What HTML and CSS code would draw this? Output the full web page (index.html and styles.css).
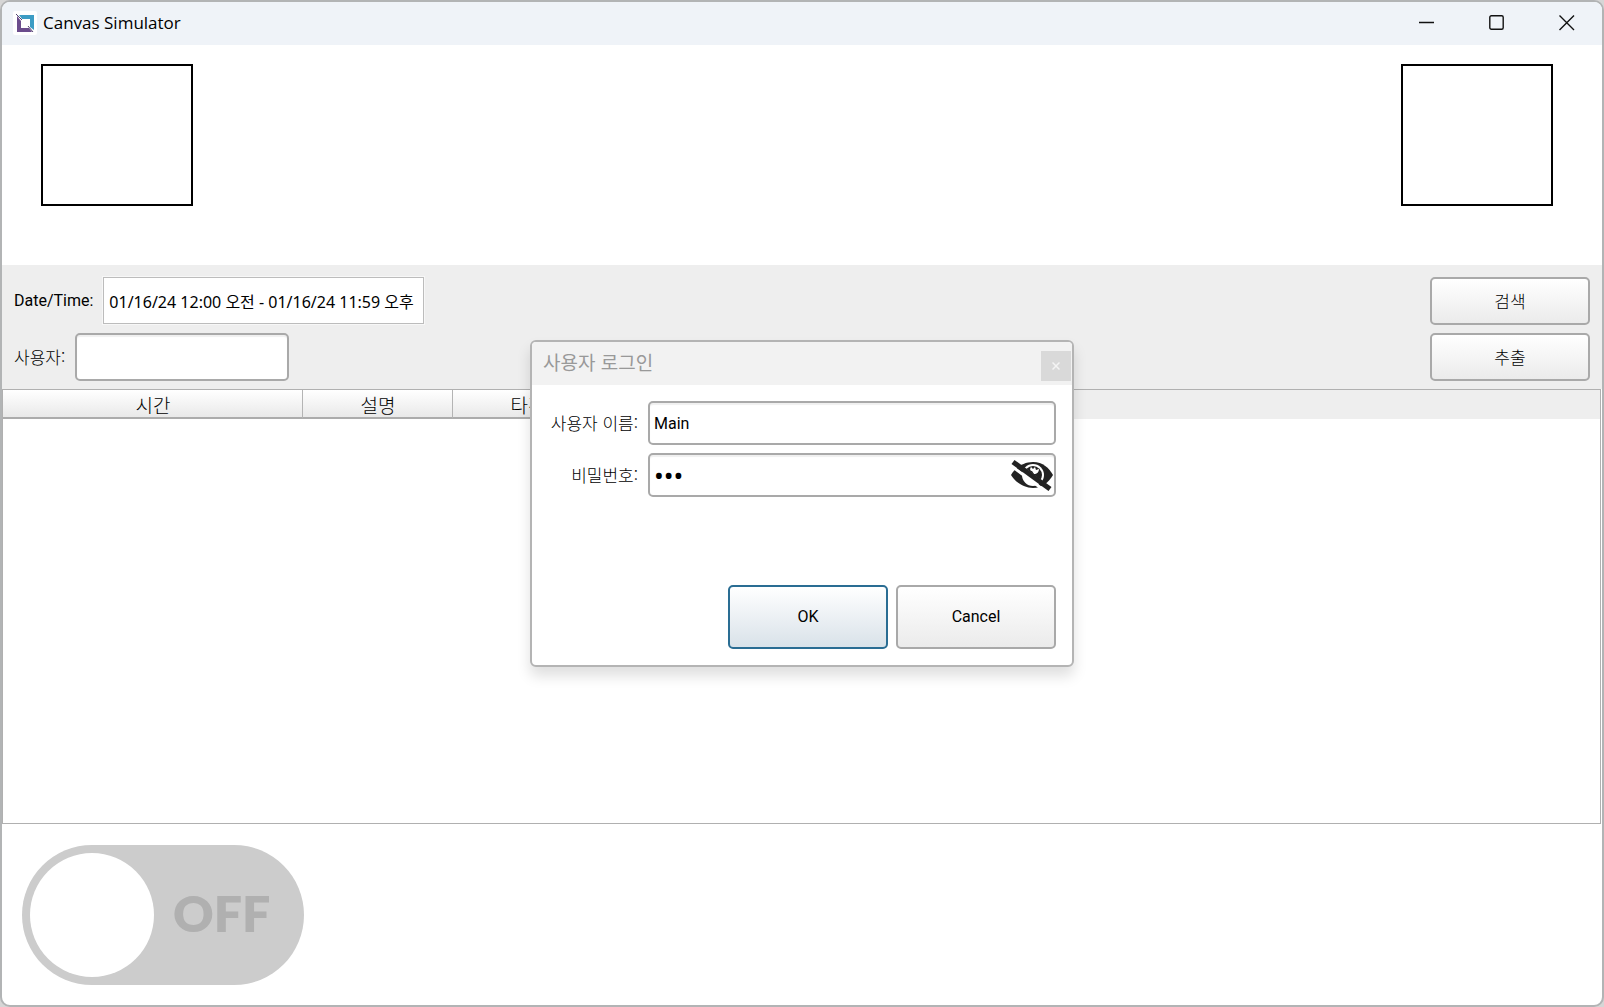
FILE: index.html
```html
<!DOCTYPE html>
<html lang="ko">
<head>
<meta charset="utf-8">
<title>Canvas Simulator</title>
<link rel="stylesheet" href="styles.css">
</head>
<body>
<div class="window">
  <header class="titlebar">
    <svg class="app-icon" viewBox="0 0 24 24" aria-hidden="true">
      <rect width="24" height="24" rx="2" fill="#fff"/>
      <path d="M4 5l4 5v7h8l3 4H4z" fill="#6b4c8c"/>
      <path d="M6 4h15v15l-4-3V8H9z" fill="#3c9cc4"/>
      <path d="M3 3l6 6M15 15l5 6" stroke="#54456f" stroke-width="1"/>
    </svg>
    <h1 class="app-title">Canvas Simulator</h1>
    <div class="window-controls">
      <button class="window-button" type="button" aria-label="Minimize">
        <svg viewBox="0 0 16 16"><path d="M0 7.5h15"/></svg>
      </button>
      <button class="window-button" type="button" aria-label="Maximize">
        <svg viewBox="0 0 16 16"><rect x=".8" y=".8" width="13.4" height="13.4" rx="1.5"/></svg>
      </button>
      <button class="window-button" type="button" aria-label="Close">
        <svg viewBox="0 0 16 16"><path d="M.5.5l14.5 14.5M15 .5L.5 15"/></svg>
      </button>
    </div>
  </header>

  <section class="canvas">
    <div class="canvas-box"></div>
    <div class="canvas-box"></div>
  </section>

  <form class="filters">
    <div class="filter-row">
      <label class="latin" for="range">Date/Time:</label>
      <input class="range" id="range" type="text" value="01/16/24 12:00 오전 - 01/16/24 11:59 오후">
      <button class="button" type="button">검색</button>
    </div>
    <div class="filter-row">
      <label for="user">사용자:</label>
      <input class="field user" id="user" type="text">
      <button class="button" type="button">추출</button>
    </div>
  </form>

  <div class="log">
    <table class="log-table">
      <colgroup><col class="col-time"><col class="col-text"><col class="col-text"><col></colgroup>
      <thead>
        <tr><th>시간</th><th>설명</th><th>타겟</th><td></td></tr>
      </thead>
    </table>
  </div>

  <footer class="footer">
    <label class="toggle">
      <input class="toggle-knob" type="checkbox">
      <span class="toggle-text">OFF</span>
    </label>
  </footer>

  <dialog class="login" open aria-labelledby="login-title">
    <div class="login-bar">
      <h2 class="login-title" id="login-title">사용자 로그인</h2>
      <button class="login-close" type="button" aria-label="Close">
        <svg viewBox="0 0 8 8"><path d="M.5.5l7 7M7.5.5l-7 7"/></svg>
      </button>
    </div>
    <form class="login-form">
      <label for="name">사용자 이름:</label>
      <input class="field latin" id="name" type="text" value="Main">
      <label for="password">비밀번호:</label>
      <div class="field password">
        <input id="password" type="password" value="abc">
        <button class="reveal" type="button" aria-label="Show password">
          <svg viewBox="0 0 42 32">
            <clipPath id="above"><path d="M2 0L42 30V0z"/></clipPath>
            <path d="M0 16C4 9 12 3 22 3s16 6 20 13c-4 7-11 13-20 13S4 23 0 16z" fill="#222"/>
            <circle cx="22" cy="16" r="11" fill="#fff"/>
            <g clip-path="url(#above)">
              <circle cx="22" cy="16" r="9" fill="#222"/>
              <path d="M20 8c-2 3 0 4 1 4l2 3c3 0 5-2 5-5l-3 1-1-3-2 2z" fill="#fff"/>
            </g>
            <path d="M-1 6l35 26" stroke="#fff" stroke-width="3"/>
            <path d="M2 3l37 27" stroke="#222" stroke-width="5"/>
          </svg>
        </button>
      </div>
      <div class="login-actions">
        <button class="button latin primary" type="button">OK</button>
        <button class="button latin" type="button">Cancel</button>
      </div>
    </form>
  </dialog>
</div>
</body>
</html>
```
FILE: styles.css
```css
* { box-sizing: border-box; }

body {
  margin: 0;
  background: #d6d6d6;
  color: #000;
  font: 300 17px/20px "Noto Sans CJK KR", sans-serif;
}

button, input { font: inherit; color: inherit; }
h1, h2 { margin: 0; font-weight: 400; }

.latin { font: 400 16px/20px Roboto, sans-serif; }

.window {
  position: relative;
  display: flex;
  flex-direction: column;
  min-height: 100vh;
  overflow: hidden;
  background: #fff;
  border: 2px solid #b2b4b5;
  border-radius: 10px;
}

.titlebar {
  display: flex;
  align-items: center;
  gap: 6px;
  height: 43px;
  padding: 0 0 2px 11px;
  background: #eff3f8;
}
.app-icon { width: 24px; height: 24px; }
.app-title { font: 17px/24px "Open Sans", sans-serif; }
.window-controls { display: flex; margin-left: auto; }
.window-button {
  display: grid;
  place-items: center;
  width: 70px;
  height: 41px;
  padding: 0;
  border: 0;
  background: none;
}
.window-button svg {
  width: 16px;
  height: 16px;
  fill: none;
  stroke: #111;
  stroke-width: 1.4;
}

.canvas {
  display: flex;
  justify-content: space-between;
  padding: 19px 49px 59px 39px;
}
.canvas-box { width: 152px; height: 142px; border: 2px solid #000; }

.filters {
  display: flex;
  flex-direction: column;
  gap: 8px;
  padding: 12px 12px 8px;
  background: #eee;
}
.filter-row { display: flex; align-items: center; gap: 10px; }
.filter-row .button { margin-left: auto; }

.field {
  width: 100%;
  height: 44px;
  padding: 0 4px;
  background: #fff;
  border: 2px solid #a9a9a9;
  border-radius: 5px;
  box-shadow: inset 0 2px 1px #f0f0f0;
}
.user { width: 214px; height: 48px; }
.range {
  align-self: flex-start;
  width: 321px;
  height: 47px;
  padding: 0 5px;
  background: #fff;
  border: 1px solid #bcbcbc;
  outline: 1px solid #f7f7f7;
  font: 400 16px/20px "Noto Sans", "Noto Sans CJK KR", sans-serif;
}

.button {
  width: 160px;
  height: 48px;
  padding: 0;
  background: linear-gradient(#fff, #ebebeb);
  border: 2px solid #a9a9a9;
  border-radius: 5px;
}
.button.primary {
  background: linear-gradient(#fff, #d9e2e9);
  border-color: #2a6d93;
}

.log {
  flex: 1;
  margin-right: 1px;
  border: 1px solid #b0b0b0;
}
.log-table {
  width: 100%;
  table-layout: fixed;
  border-collapse: separate;
  border-spacing: 0;
  background: #eee;
  font-size: 19px;
}
.col-time { width: 300px; }
.col-text { width: 150px; }
.log-table th, .log-table td { height: 29px; padding: 0; }
.log-table th {
  padding: 2px 0 0 1px;
  background: linear-gradient(#fff, #e9e9e9);
  border-right: 1px solid #b4b4b4;
  border-bottom: 2px solid #acacac;
  font-weight: 300;
}

.footer { padding: 21px 20px 20px; }
.toggle {
  display: inline-flex;
  align-items: center;
  gap: 19px;
  width: 282px;
  height: 140px;
  padding: 8px;
  background: #ccc;
  border-radius: 70px;
  color: #b0b0b0;
  font: 800 50px/56px Lato, sans-serif;
  vertical-align: top;
}
.toggle-text { padding-bottom: 4px; }
.toggle-knob {
  appearance: none;
  width: 124px;
  height: 124px;
  margin: 0;
  background: #fff;
  border-radius: 50%;
}

.login {
  position: absolute;
  inset: 0;
  width: 544px;
  height: fit-content;
  margin: auto;
  padding: 0;
  background: #fff;
  border: 2px solid #b4b4b4;
  border-radius: 6px;
  box-shadow: 0 9px 14px rgba(0, 0, 0, .13);
  color: #000;
}
.login-bar {
  display: flex;
  justify-content: space-between;
  height: 43px;
  padding: 9px 1px 0 11px;
  background: #f2f2f2;
  border-radius: 4px 4px 0 0;
}
.login-title { color: #999; font-size: 19px; line-height: 22px; }
.login-close {
  display: grid;
  place-items: center;
  width: 30px;
  height: 30px;
  padding: 0;
  background: #d9d9d9;
  border: 0;
}
.login-close svg { width: 8px; height: 8px; stroke: #f4f4f4; stroke-width: 1.5; }
.login-form {
  display: grid;
  grid-template-columns: 90px minmax(0, 1fr);
  gap: 8px 10px;
  align-items: center;
  padding: 16px;
}
.login-form label { text-align: right; white-space: nowrap; }
.password { display: flex; align-items: center; padding-right: 1px; }
.password input {
  flex: 1;
  min-width: 0;
  padding: 0;
  background: none;
  border: 0;
  font: 26px/36px "Noto Sans", sans-serif;
}
.reveal { width: 42px; height: 32px; padding: 0; background: none; border: 0; }
.reveal svg { display: block; width: 42px; height: 32px; }
.login-actions {
  display: flex;
  grid-column: 1 / -1;
  justify-content: flex-end;
  gap: 8px;
  padding-top: 80px;
}
.login-actions .button { height: 64px; }
```
